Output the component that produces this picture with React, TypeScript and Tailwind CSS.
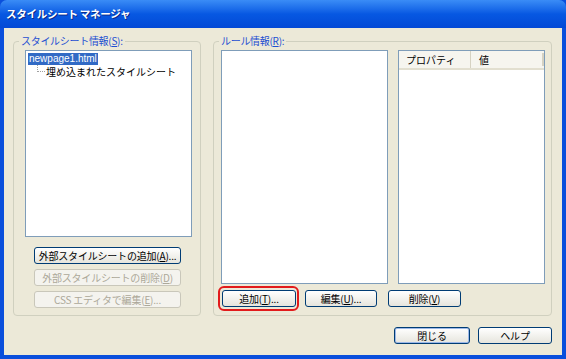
const font = { fontFamily: '"Noto Sans CJK JP", "Liberation Sans", sans-serif' };

const XpButton = ({
  label,
  width,
  disabled,
  primary,
}: {
  label: React.ReactNode;
  width: string;
  disabled?: boolean;
  primary?: boolean;
}) => (
  <div
    className={`${width} h-[17px] flex items-center justify-center whitespace-nowrap rounded-[3px] border text-[10px] leading-none tracking-[-0.2px] ${
      disabled
        ? "border-[#c9c7ba] bg-[#f4f3ee] text-[#aca899]"
        : "border-[#003c74] bg-gradient-to-b from-white to-[#e6e5dd] text-black"
    } ${primary ? "shadow-[inset_0_0_0_1px_#9cb8e8]" : ""}`}
  >
    {label}
  </div>
);

const u = (c: string) => <span className="underline">{c}</span>;

export default function App() {
  return (
    <div className="w-[566px] h-[359px] bg-[#0a4fdc] overflow-hidden" style={font}>
      {/* Title bar */}
      <div className="h-[28px] rounded-t-[7px] bg-gradient-to-b from-[#3a8cf6] via-[#0758e2] to-[#0349d6] flex items-center px-[6px]">
        <span className="text-white font-bold text-[10.5px] tracking-tight [text-shadow:1px_1px_0_#0a2a8a]">
          スタイルシート マネージャ
        </span>
      </div>

      {/* Body */}
      <div className="mx-[4px] h-[327px] bg-[#ece9d8] pl-[9px] pt-[13px] flex flex-col">
        <div className="flex gap-[12px]">
          {/* Left group */}
          <div className="relative w-[188px] h-[275px] border border-[#d0d0bf] rounded-[4px] pt-[8px] pl-[11px] flex flex-col">
            <span className="absolute -top-[7px] left-[5px] px-[2px] bg-[#ece9d8] text-[#1f4fd2] text-[10px] leading-[12px] tracking-[-0.3px]">
              スタイルシート情報({u("S")}):
            </span>
            <div className="w-[167px] h-[187px] border border-[#7f9db9] bg-white pt-[1px] pl-[2px] text-[10px] leading-[12px]">
              <div className="inline-block bg-[#316ac5] text-white px-[1px] h-[12px] leading-[12px] font-[Liberation_Sans]">
                newpage1.html
              </div>
              <div className="flex items-center h-[13px]">
                <div className="ml-[9px] w-[8px] h-[7px] -mt-[6px] border-l border-b border-dotted border-[#a0a0a0]" />
                <span className="ml-[1px]">埋め込まれたスタイルシート</span>
              </div>
            </div>
            <div className="flex flex-col gap-[5px] mt-[10px] pl-[9px]">
              <XpButton width="w-[147px]" label={<>外部スタイルシートの追加({u("A")})...</>} />
              <XpButton width="w-[147px]" disabled label={<>外部スタイルシートの削除({u("D")})</>} />
              <XpButton width="w-[147px]" disabled label={<>CSS エディタで編集({u("E")})...</>} />
            </div>
          </div>

          {/* Right group */}
          <div className="relative w-[339px] h-[275px] border border-[#d0d0bf] rounded-[4px] pt-[8px] pl-[7px] flex flex-col">
            <span className="absolute -top-[7px] left-[5px] px-[2px] bg-[#ece9d8] text-[#1f4fd2] text-[10px] leading-[12px] tracking-[-0.3px]">
              ルール情報({u("R")}):
            </span>
            <div className="flex gap-[10px]">
              <div className="w-[167px] h-[234px] border border-[#7f9db9] bg-white" />
              <div className="w-[147px] h-[234px] border border-[#7f9db9] bg-white">
                <div className="flex h-[19px] bg-[#f6f5ef] border-b-2 border-[#e2dfd0] text-[10px] items-center">
                  <div className="w-[72px] h-full flex items-center pl-[7px] border-r border-[#d6d2c2]">
                    プロパティ
                  </div>
                  <div className="flex-1 h-full flex items-center pl-[8px]">値</div>
                  <div className="w-[2px] h-[13px] bg-[#d6d2c2]" />
                </div>
              </div>
            </div>
            <div className="flex gap-[9px] mt-[6px] pl-[1px]">
              <div className="relative">
                <XpButton width="w-[74px]" label={<>追加({u("T")})...</>} />
                <div className="absolute -left-[4px] -right-[3px] -top-[4px] -bottom-[4px] border-2 border-[#e21b1b] rounded-[6px]" />
              </div>
              <XpButton width="w-[72px]" label={<>編集({u("U")})...</>} />
              <div className="ml-[2px]">
                <XpButton width="w-[73px]" label={<>削除({u("V")})</>} />
              </div>
            </div>
          </div>
        </div>

        {/* Bottom buttons */}
        <div className="flex justify-end gap-[8px] mt-[11px] pr-[10px]">
          <XpButton width="w-[76px]" primary label="閉じる" />
          <XpButton width="w-[74px]" label="ヘルプ" />
        </div>
      </div>
    </div>
  );
}
